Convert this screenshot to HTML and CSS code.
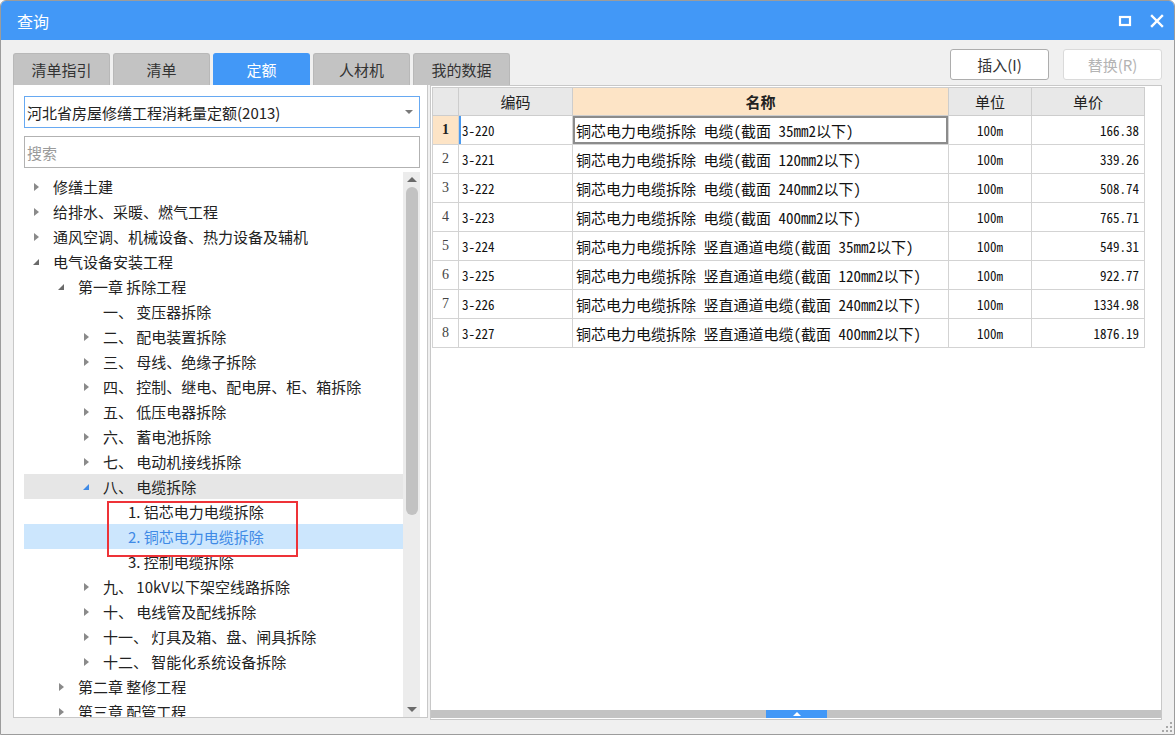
FILE: index.html
```html
<!DOCTYPE html>
<html lang="zh">
<head>
<meta charset="utf-8">
<title>查询</title>
<link rel="stylesheet" href="styles.css">
</head>
<body>
<div class="window">
  <div class="titlebar">
    <span class="title">查询</span>
    <div class="win-btns">
      <svg class="wbtn" width="14" height="12" viewBox="0 0 14 12"><rect x="2" y="2" width="10" height="8" fill="none" stroke="#fff" stroke-width="2.2"/></svg>
      <svg class="wbtn" width="14" height="14" viewBox="0 0 14 14"><path d="M2 2 L12 12 M12 2 L2 12" stroke="#fff" stroke-width="2.4" stroke-linecap="square"/></svg>
    </div>
  </div>
  <div class="content">
    <div class="toprow">
      <div class="tabs">
        <div class="tab">清单指引</div>
        <div class="tab">清单</div>
        <div class="tab active">定额</div>
        <div class="tab">人材机</div>
        <div class="tab">我的数据</div>
      </div>
      <div class="actions">
        <div class="btn">插入(I)</div>
        <div class="btn disabled">替换(R)</div>
      </div>
    </div>
    <div class="main">
      <div class="left">
        <div class="select"><span>河北省房屋修缮工程消耗量定额(2013)</span><span class="caret"></span></div>
        <div class="search">搜索</div>
        <div class="tree-wrap">
          <div class="tree">
            <div class="row l0"><span class="arr c"></span><span class="txt">修缮土建</span></div>
            <div class="row l0"><span class="arr c"></span><span class="txt">给排水、采暖、燃气工程</span></div>
            <div class="row l0"><span class="arr c"></span><span class="txt">通风空调、机械设备、热力设备及辅机</span></div>
            <div class="row l0"><span class="arr e"></span><span class="txt">电气设备安装工程</span></div>
            <div class="row l1"><span class="arr e"></span><span class="txt">第一章 拆除工程</span></div>
            <div class="row l2"><span class="arr"></span><span class="txt">一、 变压器拆除</span></div>
            <div class="row l2"><span class="arr c"></span><span class="txt">二、 配电装置拆除</span></div>
            <div class="row l2"><span class="arr c"></span><span class="txt">三、 母线、绝缘子拆除</span></div>
            <div class="row l2"><span class="arr c"></span><span class="txt">四、 控制、继电、配电屏、柜、箱拆除</span></div>
            <div class="row l2"><span class="arr c"></span><span class="txt">五、 低压电器拆除</span></div>
            <div class="row l2"><span class="arr c"></span><span class="txt">六、 蓄电池拆除</span></div>
            <div class="row l2"><span class="arr c"></span><span class="txt">七、 电动机接线拆除</span></div>
            <div class="row l2 hover"><span class="arr e blue"></span><span class="txt">八、 电缆拆除</span></div>
            <div class="row l3"><span class="txt">1. 铝芯电力电缆拆除</span></div>
            <div class="row l3 selected"><span class="txt">2. 铜芯电力电缆拆除</span></div>
            <div class="row l3"><span class="txt">3. 控制电缆拆除</span></div>
            <div class="row l2"><span class="arr c"></span><span class="txt">九、 10kV以下架空线路拆除</span></div>
            <div class="row l2"><span class="arr c"></span><span class="txt">十、 电线管及配线拆除</span></div>
            <div class="row l2"><span class="arr c"></span><span class="txt">十一、 灯具及箱、盘、闸具拆除</span></div>
            <div class="row l2"><span class="arr c"></span><span class="txt">十二、 智能化系统设备拆除</span></div>
            <div class="row l1"><span class="arr c"></span><span class="txt">第二章 整修工程</span></div>
            <div class="row l1"><span class="arr c"></span><span class="txt">第三章 配管工程</span></div>
          </div>
          <div class="vscroll">
            <span class="sarr up"></span>
            <div class="thumb-track"><div class="thumb"></div></div>
            <span class="sarr down"></span>
          </div>
          <div class="redbox"></div>
        </div>
      </div>
      <div class="right">
        <div class="grid-area">
          <table class="grid">
            <colgroup>
              <col class="c-rn"><col class="c-code"><col class="c-name"><col class="c-unit"><col class="c-price">
            </colgroup>
            <thead>
              <tr><th></th><th>编码</th><th class="sel">名称</th><th>单位</th><th>单价</th></tr>
            </thead>
            <tbody>
              <tr class="cur"><td class="rn">1</td><td class="code">3-220</td><td class="name">铜芯电力电缆拆除 电缆(截面 35mm2以下)</td><td class="unit">100m</td><td class="price">166.38</td></tr>
              <tr><td class="rn">2</td><td class="code">3-221</td><td class="name">铜芯电力电缆拆除 电缆(截面 120mm2以下)</td><td class="unit">100m</td><td class="price">339.26</td></tr>
              <tr><td class="rn">3</td><td class="code">3-222</td><td class="name">铜芯电力电缆拆除 电缆(截面 240mm2以下)</td><td class="unit">100m</td><td class="price">508.74</td></tr>
              <tr><td class="rn">4</td><td class="code">3-223</td><td class="name">铜芯电力电缆拆除 电缆(截面 400mm2以下)</td><td class="unit">100m</td><td class="price">765.71</td></tr>
              <tr><td class="rn">5</td><td class="code">3-224</td><td class="name">铜芯电力电缆拆除 竖直通道电缆(截面 35mm2以下)</td><td class="unit">100m</td><td class="price">549.31</td></tr>
              <tr><td class="rn">6</td><td class="code">3-225</td><td class="name">铜芯电力电缆拆除 竖直通道电缆(截面 120mm2以下)</td><td class="unit">100m</td><td class="price">922.77</td></tr>
              <tr><td class="rn">7</td><td class="code">3-226</td><td class="name">铜芯电力电缆拆除 竖直通道电缆(截面 240mm2以下)</td><td class="unit">100m</td><td class="price">1334.98</td></tr>
              <tr><td class="rn">8</td><td class="code">3-227</td><td class="name">铜芯电力电缆拆除 竖直通道电缆(截面 400mm2以下)</td><td class="unit">100m</td><td class="price">1876.19</td></tr>
            </tbody>
          </table>
        </div>
        <div class="hbar"><div class="handle"><span class="hup"></span></div></div>
      </div>
    </div>
    <div class="footer">
      <svg class="grip" width="10" height="10" viewBox="0 0 10 10">
        <rect x="8" y="0" width="2" height="2" fill="#a8a8a8"/>
        <rect x="4" y="4" width="2" height="2" fill="#a8a8a8"/><rect x="8" y="4" width="2" height="2" fill="#a8a8a8"/>
        <rect x="0" y="8" width="2" height="2" fill="#a8a8a8"/><rect x="4" y="8" width="2" height="2" fill="#a8a8a8"/><rect x="8" y="8" width="2" height="2" fill="#a8a8a8"/>
      </svg>
    </div>
  </div>
</div>
</body>
</html>
```

FILE: styles.css
```css
* { box-sizing: border-box; }
html, body { margin: 0; padding: 0; }
body {
  width: 1175px;
  height: 735px;
  overflow: hidden;
  background: #ffffff;
  font-family: "Noto Sans CJK SC", "Microsoft YaHei", sans-serif;
  color: #222;
}
.window {
  width: 1175px;
  height: 735px;
  border: 1px solid #9c9c9c;
  border-radius: 6px 6px 0 0;
  overflow: hidden;
  display: flex;
  flex-direction: column;
  background: #f0f0f0;
}
.titlebar {
  height: 39px;
  flex: none;
  background: #4298f7;
  display: flex;
  align-items: center;
  justify-content: space-between;
  padding: 0 10px 0 16px;
}
.title { color: #fff; font-size: 16px; line-height: 20px; }
.win-btns { display: flex; align-items: center; gap: 18px; }
.wbtn { display: block; }

.content {
  flex: 1;
  display: flex;
  flex-direction: column;
  padding: 0 12px 0 12px;
}
.toprow {
  height: 36px;
  margin-top: 9px;
  display: flex;
  justify-content: space-between;
  flex: none;
}
.tabs { display: flex; gap: 3px; align-items: flex-end; }
.tab {
  width: 97px;
  height: 32px;
  background: #c3c3c3;
  border: 1px solid #b8b8b8;
  border-bottom: none;
  border-radius: 3px 3px 0 0;
  font-size: 15px;
  color: #333;
  display: flex;
  align-items: center;
  justify-content: center;
}
.tab.active { background: #4298f7; border-color: #4298f7; color: #fff; }
.actions { display: flex; gap: 14px; align-items: flex-start; }
.btn {
  width: 99px;
  height: 31px;
  background: #fff;
  border: 1px solid #adadad;
  border-radius: 3px;
  font-size: 15px;
  color: #333;
  display: flex;
  align-items: center;
  justify-content: center;
}
.btn.disabled { color: #b4b4b4; border-color: #dadada; }

.main {
  height: 635px;
  display: flex;
  gap: 2px;
  flex: none;
}
.left {
  width: 415px;
  height: 633px;
  background: #fff;
  border: 1px solid #c8c8c8;
  border-top: none;
  padding: 11px 7px 0 10px;
  display: flex;
  flex-direction: column;
}
.select {
  height: 32px;
  border: 1px solid #67a9f2;
  display: flex;
  align-items: center;
  justify-content: space-between;
  padding: 0 6px 0 2px;
  font-size: 15px;
  color: #222;
  flex: none;
}
.caret {
  width: 0; height: 0;
  border-left: 4px solid transparent;
  border-right: 4px solid transparent;
  border-top: 4px solid #7a7a7a;
}
.search {
  height: 32px;
  margin-top: 8px;
  border: 1px solid #b2b2b2;
  display: flex;
  align-items: center;
  padding-left: 2px;
  font-size: 15px;
  color: #9a9a9a;
  flex: none;
}
.tree-wrap {
  position: relative;
  flex: 1;
  margin-top: 4px;
  display: flex;
  overflow: hidden;
}
.tree { flex: 1; padding-top: 2px; overflow: hidden; }
.row {
  height: 25px;
  display: flex;
  align-items: center;
  font-size: 15px;
  color: #222;
  white-space: nowrap;
}
.row.l0 { padding-left: 6px; }
.row.l1 { padding-left: 31px; }
.row.l2 { padding-left: 56px; }
.row.l3 { padding-left: 104px; }
.row.hover { background: #e6e6e6; }
.row.selected { background: #cce6fd; color: #3f8ae6; }
.arr {
  width: 12px;
  height: 12px;
  margin-right: 11px;
  position: relative;
  flex: none;
}
.arr.c::before {
  content: "";
  position: absolute;
  left: 4px; top: 2px;
  border-left: 5px solid #8a8a8a;
  border-top: 4px solid transparent;
  border-bottom: 4px solid transparent;
}
.arr.e::before {
  content: "";
  position: absolute;
  left: 3px; top: 3px;
  border-bottom: 6px solid #6a6a6a;
  border-left: 6px solid transparent;
}
.arr.e.blue::before { border-bottom-color: #3f8ae6; }

.vscroll {
  width: 17px;
  flex: none;
  background: #ececec;
  display: flex;
  flex-direction: column;
  align-items: center;
}
.sarr { width: 0; height: 0; flex: none; }
.sarr.up {
  margin-top: 5px;
  border-left: 5px solid transparent;
  border-right: 5px solid transparent;
  border-bottom: 5px solid #6a6a6a;
}
.sarr.down {
  margin-bottom: 5px;
  border-left: 5px solid transparent;
  border-right: 5px solid transparent;
  border-top: 5px solid #6a6a6a;
}
.thumb-track { flex: 1; width: 100%; padding: 5px 2px 0 2px; }
.thumb { width: 12px; margin: 0 auto; height: 328px; background: #c2c2c2; border-radius: 6px; }
.redbox {
  position: absolute;
  left: 83px;
  top: 329px;
  width: 191px;
  height: 56px;
  border: 2px solid #ee3338;
  pointer-events: none;
}

.right {
  flex: 1;
  height: 635px;
  background: #fff;
  border: 1px solid #c8c8c8;
  padding: 1px 0 0 1px;
  display: flex;
  flex-direction: column;
}
.grid-area { flex: 1; }
.grid {
  border-collapse: collapse;
  table-layout: fixed;
  width: 712px;
  font-family: "Noto Sans Mono CJK SC", "Noto Sans CJK SC", "Liberation Mono", monospace;
  font-size: 15px;
  color: #111;
}
.c-rn { width: 26px; }
.c-code { width: 114px; }
.c-name { width: 376px; }
.c-unit { width: 83px; }
.c-price { width: 113px; }
.grid th {
  height: 28px;
  background: #e8e8e8;
  border: 1px solid #cdcdcd;
  font-family: "Noto Sans CJK SC", sans-serif;
  font-weight: normal;
  font-size: 15px;
  color: #222;
  padding: 0;
}
.grid th.sel { background: #fde4c6; font-weight: bold; }
.grid td {
  height: 29px;
  border: 1px solid #d3d3d3;
  padding: 0 3px;
  white-space: nowrap;
  overflow: hidden;
}
.grid td.rn {
  text-align: center;
  font-family: "Liberation Serif", serif;
  font-size: 14px;
  color: #444;
  padding: 0;
}
.grid tr.cur td.rn { background: #fde4c6; font-weight: bold; color: #222; }
.grid tr.cur td.code { box-shadow: inset 2px 0 0 #4a9af0; }
.grid tr.cur td.name { box-shadow: inset 0 0 0 2px #8c8c8c; }
.grid td.code { font-size: 13px; }
.grid td.unit { text-align: center; font-size: 13px; }
.grid td.price { text-align: right; font-size: 13px; padding-right: 5px; }

.hbar {
  height: 8px;
  margin: 0 0 1px -1px;
  background: #c3c3c3;
  position: relative;
  flex: none;
}
.handle {
  position: absolute;
  left: 335px;
  top: 0;
  width: 61px;
  height: 8px;
  background: #4298f7;
  display: flex;
  justify-content: center;
  align-items: center;
}
.hup {
  width: 0; height: 0;
  border-left: 4px solid transparent;
  border-right: 4px solid transparent;
  border-bottom: 4px solid #fff;
}
.footer {
  flex: 1;
  display: flex;
  justify-content: flex-end;
  align-items: flex-end;
  padding: 0 0 2px 0;
  margin-right: -10px;
}
.grip { display: block; }
```
